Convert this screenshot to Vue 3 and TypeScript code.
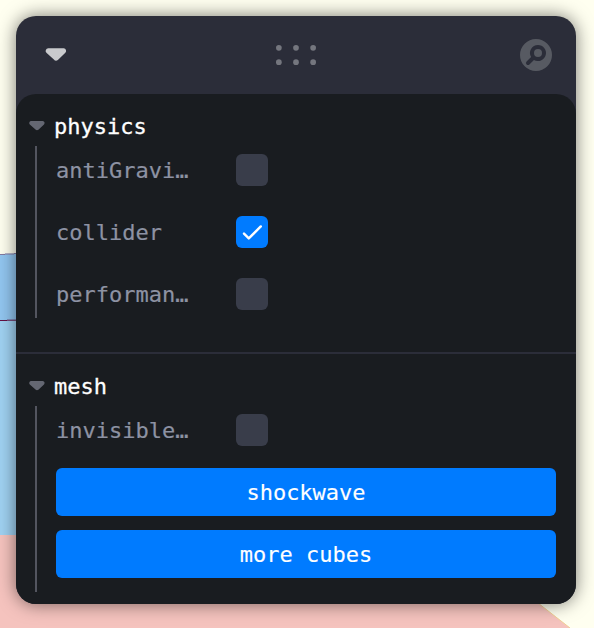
<script setup lang="ts">
import { ref } from 'vue'

interface Toggle {
  label: string
  checked: boolean
}

interface Folder {
  name: string
  toggles: Toggle[]
  actions: string[]
}

const folders = ref<Folder[]>([
  {
    name: 'physics',
    toggles: [
      { label: 'antiGravi…', checked: false },
      { label: 'collider', checked: true },
      { label: 'performan…', checked: false },
    ],
    actions: [],
  },
  {
    name: 'mesh',
    toggles: [{ label: 'invisible…', checked: false }],
    actions: ['shockwave', 'more cubes'],
  },
])
</script>

<template>
  <main class="stage">
    <svg class="scene" width="594" height="628" viewBox="0 0 594 628" aria-hidden="true">
      <path d="M0 254L40 253V322H0z" fill="#92c6f0" />
      <path d="M0 320H40V535H0z" fill="#a0d2f2" />
      <path d="M0 535H451L570 628H0z" fill="#f5c3be" />
      <path d="M0 254.5H5M5 254H14M14 253.5H40" stroke="#85799f" />
      <path d="M0 320.5H7M7 320.2H40" stroke="#651044" />
      <path d="M500 573.3L570 628" stroke="#f0cf94" />
    </svg>

    <section class="panel">
      <header class="titlebar">
        <button class="icon-button fold">
          <svg width="24" height="16" viewBox="0 0 9 5" fill="currentColor">
            <path d="M3.8 4.4c.4.3 1 .3 1.4 0L8 1.7A1 1 0 007.4 0H1.6a1 1 0 00-.7 1.7l3 2.7z" />
          </svg>
        </button>
        <div class="drag">
          <svg width="40" height="20" viewBox="0 0 28 14" fill="currentColor">
            <circle cx="2" cy="2" r="2" />
            <circle cx="14" cy="2" r="2" />
            <circle cx="26" cy="2" r="2" />
            <circle cx="2" cy="12" r="2" />
            <circle cx="14" cy="12" r="2" />
            <circle cx="26" cy="12" r="2" />
          </svg>
        </div>
        <button class="icon-button search">
          <svg width="40" height="40" viewBox="0 0 20 20" fill="currentColor">
            <path d="M9 9a2 2 0 114 0 2 2 0 01-4 0z" />
            <path
              fill-rule="evenodd"
              clip-rule="evenodd"
              d="M10 18a8 8 0 100-16 8 8 0 000 16zm1-13a4 4 0 00-3.446 6.032l-2.261 2.26a1 1 0 101.414 1.415l2.261-2.261A4 4 0 1011 5z"
            />
          </svg>
        </button>
      </header>

      <div class="body">
        <section v-for="folder in folders" :key="folder.name" class="folder">
          <h2 class="folder-title">
            <svg width="18" height="10" viewBox="0 0 9 5" fill="currentColor">
              <path d="M3.8 4.4c.4.3 1 .3 1.4 0L8 1.7A1 1 0 007.4 0H1.6a1 1 0 00-.7 1.7l3 2.7z" />
            </svg>
            <span>{{ folder.name }}</span>
          </h2>
          <div class="rows" :class="{ 'with-actions': folder.actions.length }">
            <label v-for="toggle in folder.toggles" :key="toggle.label" class="row">
              <span class="label">{{ toggle.label }}</span>
              <input v-model="toggle.checked" class="native" type="checkbox" />
              <span class="box" :class="{ checked: toggle.checked }">
                <svg v-if="toggle.checked" viewBox="0 0 24 24" fill="none">
                  <path
                    d="M5 13l4 4L19 7"
                    stroke="currentColor"
                    stroke-width="2"
                    stroke-linecap="round"
                    stroke-linejoin="round"
                  />
                </svg>
              </span>
            </label>
            <button v-for="action in folder.actions" :key="action" class="action">{{ action }}</button>
          </div>
        </section>
      </div>
    </section>
  </main>
</template>

<style>
body {
  margin: 0;
  background: #fffff0;
}
</style>

<style scoped>
.stage {
  position: relative;
  box-sizing: border-box;
  height: 628px;
  padding: 16px 18px 24px 16px;
  overflow: hidden;
  background: #fffff0;
  font-family: 'DejaVu Sans Mono', monospace;
  font-size: 22px;
}

.scene {
  position: absolute;
  inset: 0;
}

.panel {
  position: relative;
  height: 588px;
  border-radius: 20px;
  background: #2b2d39;
  box-shadow: 0 0 18px rgba(0, 0, 0, 0.53);
}

.titlebar {
  display: grid;
  grid-template-columns: 80px 1fr 80px;
  align-items: center;
  height: 78px;
}

button {
  padding: 0;
  border: 0;
  background: none;
  font: inherit;
}

.icon-button,
.drag {
  display: flex;
  align-items: center;
  justify-content: center;
}

.fold {
  color: #c9cacd;
}

.drag {
  color: #74767e;
}

.search {
  color: #575a62;
}

.body {
  height: 510px;
  border-radius: 20px;
  background: #191c20;
}

.folder + .folder {
  margin-top: 34px;
  border-top: 2px solid #2b2d39;
}

.folder-title {
  display: flex;
  align-items: center;
  gap: 8px;
  height: 40px;
  margin: 0;
  padding: 12px 0 0 12px;
  color: #fefefe;
  font-size: 22px;
  font-weight: 400;
  line-height: 40px;
  -webkit-text-stroke: 0.3px currentColor;
}

.folder-title svg {
  color: #646772;
}

.folder-title span {
  padding-top: 2px;
}

.rows {
  display: grid;
  gap: 14px;
  margin-left: 19px;
  padding: 0 20px 0 19px;
  border-left: 2px solid #53555f;
}

.with-actions {
  padding-bottom: 14px;
}

.row {
  display: grid;
  grid-template-columns: 180px 32px;
  align-items: center;
  height: 48px;
}

.label {
  padding-top: 2px;
  color: #8d92a3;
  line-height: 46px;
  -webkit-text-stroke: 0.2px currentColor;
}

.native {
  display: none;
}

.box {
  display: flex;
  align-items: center;
  justify-content: center;
  width: 32px;
  height: 32px;
  border-radius: 6px;
  background: #393d4a;
  color: #fefefe;
}

.checked {
  background: #007bff;
}

.box svg {
  width: 90%;
  height: 90%;
}

.action {
  height: 48px;
  padding-top: 2px;
  border-radius: 6px;
  background: #007bff;
  color: #fefefe;
  line-height: 46px;
  -webkit-text-stroke: 0.15px currentColor;
}
</style>
